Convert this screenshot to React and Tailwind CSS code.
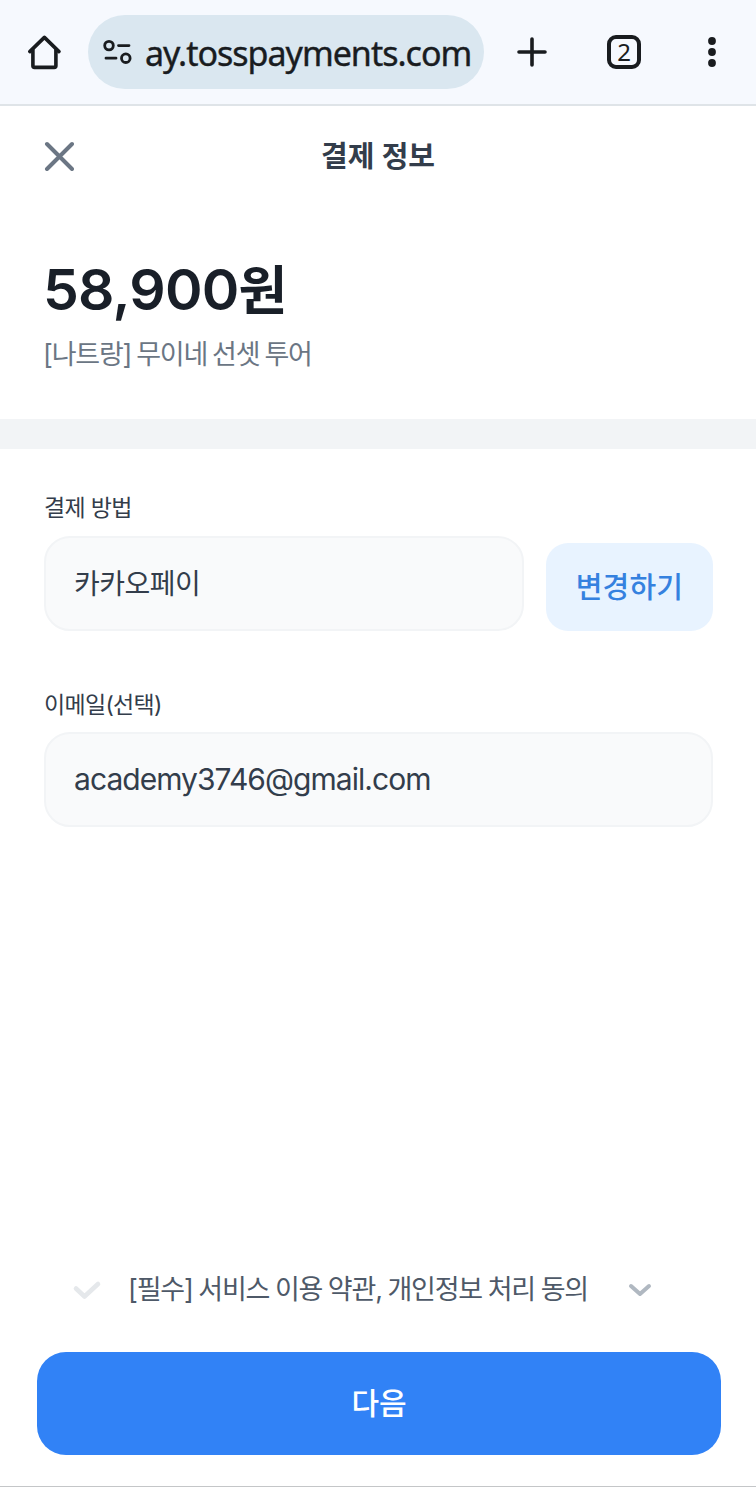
import React from "react";

const kr = "font-['Inter','Noto_Sans_CJK_KR',sans-serif]";

function BrowserBar() {
  return (
    <header className="flex h-[106px] items-start border-b-2 border-[#dfe4e8] bg-[#f6f9fe] pt-[15px] text-[#191c1f]">
      <div className="flex h-[74px] w-[88px] items-center justify-center">
        <svg width="36" height="36" viewBox="0 0 36 36" fill="none" stroke="currentColor" strokeWidth="3.6" strokeLinecap="round" strokeLinejoin="round">
          <path d="M3.8 17.6 18.4 3.4 33 17.6" />
          <path d="M6.9 16v15.8q0 1.6 1.6 1.6h19.8q1.6 0 1.6-1.6V16" />
        </svg>
      </div>
      <div className="flex h-[74px] w-[396px] items-center rounded-full bg-[#dae7f0] pl-[15px]">
        <svg width="29" height="26" viewBox="0 0 29 26" fill="none" stroke="currentColor" strokeWidth="2.8" strokeLinecap="round">
          <circle cx="6" cy="6.6" r="4.3" />
          <path d="M15.5 6.6H26M3 19.2h10" />
          <circle cx="22.8" cy="19.2" r="4.3" />
        </svg>
        <span className="pt-[1px] pl-[13px] font-['Noto_Sans',sans-serif] text-[34px] leading-[44px] tracking-[-1px] whitespace-nowrap [-webkit-text-stroke:0.4px_#191c1f]">ay.tosspayments.com</span>
      </div>
      <div className="flex h-[74px] w-[96px] items-center justify-center">
        <svg width="32" height="32" viewBox="0 0 32 32" fill="none" stroke="currentColor" strokeWidth="3.6" strokeLinecap="round">
          <path d="M3 16h26M16 3v26" />
        </svg>
      </div>
      <div className="flex h-[74px] w-[88px] items-center justify-center">
        <div className="flex size-[34px] items-center justify-center rounded-[9px] border-4 border-[#191c1f] font-['Noto_Sans',sans-serif] text-[24px] leading-none">2</div>
      </div>
      <div className="flex h-[74px] w-[88px] items-center justify-center">
        <svg width="10" height="32" viewBox="0 0 10 32" fill="currentColor">
          <circle cx="5" cy="5" r="3.9" />
          <circle cx="5" cy="16" r="3.9" />
          <circle cx="5" cy="27" r="3.9" />
        </svg>
      </div>
    </header>
  );
}

export default function App() {
  return (
    <div className={`flex h-[1487px] w-[756px] flex-col border-b border-[#c4c6c8] bg-white text-[#333d4b] ${kr}`}>
      <BrowserBar />

      <div className="grid h-[100px] grid-cols-3 items-center px-[44px]">
        <button className="justify-self-start text-[#6b7684]" aria-label="닫기">
          <svg width="30" height="30" viewBox="0 0 30 30" fill="none" stroke="currentColor" strokeWidth="4" strokeLinecap="round">
            <path d="m3 3 25 25M28 3 3 28" />
          </svg>
        </button>
        <h1 className="pt-[2px] text-center text-[29px] leading-[40px] font-semibold whitespace-nowrap">결제 정보</h1>
      </div>

      <section className="flex h-[213px] flex-col px-[43px] pt-[49px]">
        <p className="text-[57px] leading-[70px] font-semibold tracking-[-0.8px] whitespace-nowrap text-[#191f28]">
          58,900<span className="text-[53px]">원</span>
        </p>
        <p className="pt-[9px] text-[27px] leading-[40px] tracking-[-1.2px] [word-spacing:-1.4px] whitespace-nowrap text-[#6b7684]">[나트랑] 무이네 선셋 투어</p>
      </section>

      <div className="h-[30px] bg-[#f2f4f6]" />

      <main className="flex flex-1 flex-col pt-[42px] pr-[43px] pl-[44px]">
        <div className="flex items-end justify-between">
          <div className="w-[480px]">
            <p className="h-[45px] text-[23px] leading-[34px] tracking-[-0.7px]">결제 방법</p>
            <div className="flex h-[95px] items-center rounded-[26px] border-2 border-[#f2f4f6] bg-[#f9fafb] px-[28px] text-[28px] tracking-[-0.5px]">카카오페이</div>
          </div>
          <button className="h-[88px] w-[167px] rounded-[22px] bg-[#e8f3ff] pt-[2px] text-[29px] font-medium tracking-[0.2px] text-[#3581df]">변경하기</button>
        </div>
        <div className="pt-[56px]">
          <p className="h-[45px] pt-[1px] text-[23px] leading-[34px] tracking-[-0.7px]">이메일(선택)</p>
          <div className="flex h-[95px] items-center rounded-[26px] border-2 border-[#f2f4f6] bg-[#f9fafb] px-[28px] text-[30px] tracking-[-0.95px]">academy3746@gmail.com</div>
        </div>
      </main>

      <footer className="flex flex-col pr-[35px] pb-[31px] pl-[37px]">
        <div className="flex h-[84px] items-start pl-[35px] text-[#4e5968]">
          <svg className="mt-[5px]" width="30" height="30" viewBox="0 0 30 30" fill="none" stroke="#e5e8eb" strokeWidth="4.6" strokeLinecap="round" strokeLinejoin="round">
            <path d="m4 15.5 8.5 8L26 11" />
          </svg>
          <span className="pt-[2px] pl-[26px] text-[27px] leading-[40px] tracking-[-1.2px] [word-spacing:-0.7px] whitespace-nowrap">[필수] 서비스 이용 약관, 개인정보 처리 동의</span>
          <svg className="mt-[6px] ml-[39px]" width="26" height="30" viewBox="0 0 26 30" fill="none" stroke="#b0b8c1" strokeWidth="4" strokeLinecap="round" strokeLinejoin="round">
            <path d="m4 12 9 8 9-8" />
          </svg>
        </div>
        <button className="h-[103px] w-full rounded-[29px] bg-[#3182f6] text-[30px] font-medium text-white">다음</button>
      </footer>
    </div>
  );
}
